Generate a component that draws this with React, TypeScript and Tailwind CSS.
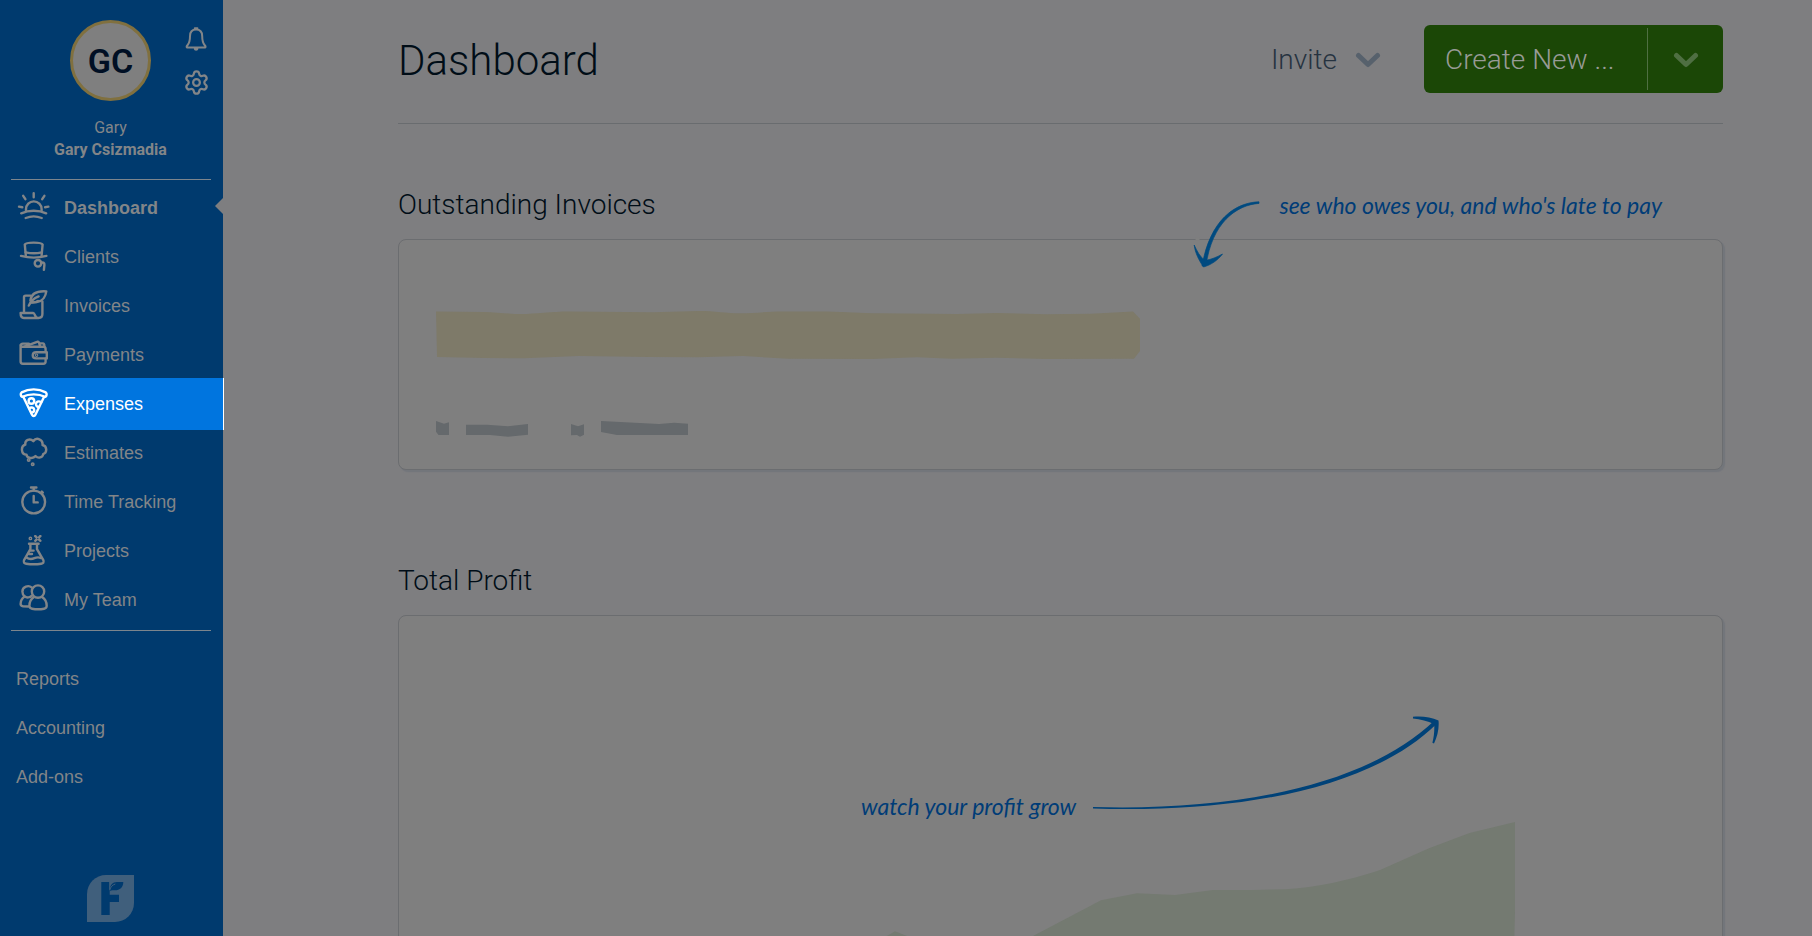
import React from 'react';
import { Settings } from 'lucide-react';
import clsx from 'clsx';

type NavItem = {
  label: string;
  icon: React.ReactNode;
};

const SunIcon = (
  <>
    <path d="M9 18.5v-1.3a7.8 7.8 0 0 1 15.6 0v1.3" />
    <path d="M4.2 21.3c7.5-3.4 17.5-3.4 25 0M8.7 26c5-2 11-2 16 0" />
    <path d="M16.7 1.2v4M6.2 3.8l2.2 3.4M27.4 3.8l-2.2 3.4M2 14.6l3.3.6M31.4 14.6l-3.3.6" />
  </>
);

const HatIcon = (
  <>
    <path d="M8.8 14.5 7.8 3.6C9 .9 24.400.9 25.6 3.6l-1 10.9" />
    <path d="M8.6 11.3c5 1.2 11.4 1.2 16.2 0" />
    <path d="M4 14.9c8 2.2 17.6 2.2 25.4 0" />
    <circle cx="21" cy="22.3" r="3.3" />
    <path d="M24.3 21.8c2-.8 3.3 0 3.1 2l-.5 5" />
  </>
);

const ScrollIcon = (
  <>
    <path d="M7 22V7.2c0-1 .6-1.6 1.6-1.6h4.8" />
    <path d="M25.4 11.5V24c0 2.6-1.4 4-4 4H7c-2.4 0-3.4-1.6-3.4-5h12.6c1.8 0 1.6 4.8 4.6 5" />
    <path d="M13.4 10.6C14.2 3.6 20 .8 29.3 1.4c-.6 4.6-3.4 9.6-8.8 10.4-2 .4-4 .2-5.6 1" />
    <path d="M11.8 15.6c1.8-4.4 5.4-7.4 9.8-9.2M16.4 12.4c1.6 0 3.2-.4 4.6-1.4" />
  </>
);

const WalletIcon = (
  <>
    <path d="M28.6 12.4V10c0-1.4-.7-2.2-2-2.2H5.4c-1.2 0-1.8-.8-1.8-1.8v16.6c0 1.4.8 2.2 2.2 2.2h20.6c1.4 0 2.2-.8 2.2-2.2v-2.8" />
    <path d="M4 6.4c0-1.2.6-1.8 1.8-1.8h6M7.4 7.6l13.4-5c1-.2 1.6 1.4 2.2 5M23.4 4.4h2.4c1 0 1.6.8 1.6 3" />
    <path d="M29.8 13.2H19.2c-4.6 0-4.6 6.2 0 6.2h10.6z" />
    <circle cx="19.6" cy="16.3" r=".5" />
  </>
);

const PizzaIcon = (
  <>
    <path d="M5.2 8.8C3.6 8.2 3.2 5.4 4.6 4.4c7.4-4 16.8-4 24.2 0 1.4 1 1 3.8-.6 4.4-6.8-3.2-16.2-3.2-23 0z" />
    <path d="m6.4 9 8.6 17.8c.8 1.6 2.6 1.6 3.4 0L27 9" />
    <circle cx="14.4" cy="13" r="2.8" />
    <path d="M24.2 14.2c-2.6-1.8-5.4-.4-5.2 2.2.2 1.6 1.4 2.6 3 2.6M12.2 20.2c2.4-1.6 5-.4 5 1.8 0 1.6-1.2 2.6-3 2.6" />
  </>
);

const ThoughtIcon = (
  <>
    <path d="M8.3 7.6c-.6-4.6 4.7-6.6 8-3.4 3-4.4 10-2 9.2 3.8 4.7 1 5 7.6.7 9.2-.4 3.4-5 4.6-7.7 1.8-2.5 3.2-8.7 2.2-9-1.4-5.7-.2-6-8.6-1.2-10z" />
    <circle cx="11.7" cy="22.9" r=".8" />
    <circle cx="15.7" cy="27.2" r=".8" />
  </>
);

const StopwatchIcon = (
  <>
    <circle cx="16.7" cy="16" r="11.4" />
    <path d="M14 1.5h5.4M16.7 1.5v3M24.8 5.6l1 1" />
    <path d="M16.7 10v6.4h4" />
  </>
);

const FlaskIcon = (
  <>
    <path d="M12 8.8h9.6M13.4 9v5.2L7.2 24.8c-1.2 2.6 0 3.6 2 3.9 5 .7 10 .7 15 0 2-.3 3.2-1.3 2-3.9L20 14.2V9" />
    <path d="M9.4 22.6c3.2 2.2 5.4 1.8 8 .6 2.2-1 4.4-1.2 6.4-.2M13.6 15.6h3M12 19h3" />
    <circle cx="13.4" cy="3.4" r=".7" />
    <path d="m18.200 1 1.4 1.300M23.400 1 22 2.300M18.200 5.800l1.400-1.300M23.400 5.800 22 4.500" />
  </>
);

const TeamIcon = (
  <>
    <circle cx="21" cy="7.6" r="6.2" />
    <path d="M14.6 3.4C11.6.9 5.4 2.4 5.4 7.6c0 4 3.4 6.2 6 5.800 1.500-.1 2.700-.9 3.600-2" />
    <path d="M7.6 12.6c-2.6 1.8-4 4.8-4 7.4 0 1.500.8 2 2.400 2.200l5.400.3" />
    <path d="M17 13c-2.8 1.8-4.600 5.400-4.600 8.800 0 1.800 1 2.600 2.700 2.900 4.200.8 7.800.8 12 0 1.700-.3 2.600-1.100 2.600-2.900 0-3.400-1.800-7-4.700-8.800" />
  </>
);

const navItems: NavItem[] = [
  { label: 'Dashboard', icon: SunIcon },
  { label: 'Clients', icon: HatIcon },
  { label: 'Invoices', icon: ScrollIcon },
  { label: 'Payments', icon: WalletIcon },
  { label: 'Expenses', icon: PizzaIcon },
  { label: 'Estimates', icon: ThoughtIcon },
  { label: 'Time Tracking', icon: StopwatchIcon },
  { label: 'Projects', icon: FlaskIcon },
  { label: 'My Team', icon: TeamIcon },
];

const moreItems = ['Reports', 'Accounting', 'Add-ons'];

const Chevron: React.FC<{ className?: string }> = ({ className }) => (
  <svg viewBox="0 0 26 16" className={clsx('h-4 w-[26px] fill-none stroke-current', className)} aria-hidden="true">
    <path d="M3.5 3.5 13 12.5 22.5 3.5" strokeWidth="5" strokeLinecap="round" strokeLinejoin="round" />
  </svg>
);

const Sidebar: React.FC = () => (
  <aside className='relative z-10 flex w-[223px] shrink-0 flex-col bg-[#003a6e] font-["Liberation_Sans",Arial,sans-serif] text-[#828588]'>
    <div className='relative flex flex-col items-center pt-5 pr-0.5 font-["Roboto",sans-serif]'>
      <div className="flex size-[81px] items-center justify-center rounded-full border-3 border-[#80703f] bg-[#7f7f7f] pt-0.5 text-[34px] font-semibold text-[#000f24]">
        GC
      </div>
      <div className="mt-4 text-center text-base leading-[22px]">
        <p>Gary</p>
        <p className="font-bold">Gary Csizmadia</p>
      </div>

      {/* Account shortcuts */}
      <div className="absolute top-[26px] right-[13px] flex flex-col gap-4">
        <button type="button" aria-label="Notifications" className="size-[27px]">
          <svg viewBox="0 0 27 27" className="size-full fill-none stroke-current" strokeWidth="2" strokeLinejoin="round" strokeLinecap="round">
            <path d="M11.8 3.8V2.3h2.6v1.5M13.1 3.6c-4.2 0-6.1 3-6.1 6.6 0 4.4-.6 6.6-2.4 8.8-1.2 1.4-1.5 2.6.2 2.6h16.6c1.7 0 1.4-1.2.2-2.6-1.8-2.2-2.4-4.4-2.4-8.8 0-3.6-1.9-6.6-6.1-6.6z" />
            <path d="M11.8 22.8c.2 1.3 2.4 1.3 2.6 0z" />
          </svg>
        </button>
        <button type="button" aria-label="Settings">
          <Settings className="size-[27px]" strokeWidth={2} />
        </button>
      </div>
    </div>

    <hr className="mt-[18px] mr-3 ml-[11px] border-[#7c858d]" />

    <nav className="mt-[3px] flex flex-col text-lg leading-6">
      {navItems.map(({ label, icon }) => (
        <a
          key={label}
          href="#"
          className={clsx(
            'relative flex items-center gap-3.5 pl-[17px]',
            label === 'Dashboard' && 'font-bold',
            label === 'Expenses'
              ? '-mt-px -mr-px -mb-0.5 h-[52px] border-r border-white bg-[#0075df] text-white'
              : 'h-[49px]',
          )}
        >
          <svg
            viewBox="0 0 33 32"
            className="h-8 w-[33px] fill-none stroke-current"
            strokeWidth="2.4"
            strokeLinecap="round"
            strokeLinejoin="round"
            aria-hidden="true"
          >
            {icon}
          </svg>
          {label}
          {label === 'Dashboard' && (
            <span className="absolute top-[15px] right-0 border-y-8 border-r-8 border-y-transparent border-r-[#7e7e80]" />
          )}
        </a>
      ))}
    </nav>

    <hr className="mt-1.5 mr-3 ml-[11px] border-[#7c858d]" />

    <nav className="mt-[23px] flex flex-col text-lg leading-6">
      {moreItems.map((label) => (
        <a key={label} href="#" className="flex h-[49px] items-center pl-4">
          {label}
        </a>
      ))}
    </nav>

    <div className="mt-auto flex justify-center pr-0.5 pb-3.5">
      <svg viewBox="0 0 47 47" className="size-[47px]" aria-hidden="true">
        <path d="M19 0h28v28a19 19 0 0 1-19 19H0V19A19 19 0 0 1 19 0z" fill="#405f7c" />
        <path d="M14.3 7h8.4v12.7H32V27h-9.3v13h-8.4z" fill="#003a6e" />
        <path d="M22.700 15.5C22.700 10 25.500 7 30 7h6.300c0 5.500-3.500 8.300-8.300 8.300-2 0-3.500-.5-5.300.7z" fill="#003a6e" />
        <path d="M22.700 15.200c.7-3.200 2.800-5.300 5.600-6.200M22.700 6.500v8" fill="none" stroke="#405f7c" />
      </svg>
    </div>
  </aside>
);

const Header: React.FC = () => (
  <header className="flex items-center border-b border-[#696c6f] pt-[25px] pb-[30px]">
    <h1 className="pt-[3px] text-[42px] leading-[65px] font-light">Dashboard</h1>
    <button type="button" className="ml-auto flex items-center gap-[18px] pt-0.5 text-[28px] font-light text-[#263340]">
      Invite
      <Chevron className="text-[#57616c]" />
    </button>
    <div className="ml-[43px] flex h-[68px] rounded-md bg-[#1b4706] py-[3px]">
      <button type="button" className="w-[224px] border-r border-[#4f6f42] pt-0.5 pl-[21px] text-left text-[28px] font-light text-[#989b96]">
        Create New ...
      </button>
      <button type="button" aria-label="More options" className="flex w-[75px] items-center justify-center pt-0.5 text-[#4f6f42]">
        <Chevron />
      </button>
    </div>
  </header>
);

const note = 'font-["Lato",cursive] text-[23px] leading-7 text-[#003c77] italic';
const card = 'rounded-lg border border-[#6b6d70] bg-[#7f7f7f] shadow-[2px_2px_1px_#73767b]';
const sectionTitle = 'text-[28px] leading-10 font-light';

const OutstandingInvoices: React.FC = () => (
  <section className="relative mt-[61px]">
    <div className="mb-3.5 flex items-center justify-between pr-[61px]">
      <h2 className={sectionTitle}>Outstanding Invoices</h2>
      <p className={note}>see who owes you, and who's late to pay</p>
    </div>
    <div className={clsx(card, 'pt-[71px] pb-8 pl-[37px]')}>
      <svg viewBox="0 0 704 48" className="h-12 w-[704px] fill-[#7e7a69]" aria-hidden="true">
        <path d="M0 .5 48 1C62 1.5 74 3 86 3s30-2.5 47-2.5L217 1.3 262 0c18 0 28 2.3 42 2.3S330 .5 347 .5h44c20 .5 33 1.5 53 1.8L521 3l40-1 49 1.3 45-.6L697 .5l7 7.2V40l-6 7.7-88 .3-49-1.3-45 1-35-1.4-45 1.7-84-.3-45-2.7-45 1.3-50-.3-69-1-55 2.3L48 47 1 46z" />
      </svg>
      <svg viewBox="0 0 252 16" className="mt-[62px] h-4 w-[252px] fill-[#65696c]" aria-hidden="true">
        <path d="m0 0 8 2.7 5-1.4V14H2.5L0 10.7z" />
        <path d="M30 3.7h21l21 1.6L92 3v10.7l-20 2L54 14H30z" />
        <path d="m135 3 7 2.3 6-2v10.4l-4 2-3-1.7-6 .3z" />
        <path d="m165 0 58 3 15-1.3 14 1V14h-71l-16-3z" />
      </svg>
    </div>

    <svg viewBox="0 0 67 68" className="absolute top-4 right-[463px] h-[68px] w-[67px]" aria-hidden="true">
      <path d="M2.5 38h4" stroke="#7f7f7f" strokeWidth="3" />
      <g fill="#004a80" stroke="#004a80" strokeWidth=".7">
        <path d="M66 .8C42 1.5 17 19 9 65l4-.5C19 22 43 4 66 2.4z" />
        <path d="M1.2 44c1 8 4.500 15 9.300 22C18 64 25 59 29.500 53c-5.500 3-11 5.500-17.500 6.500C7 56 4 50 1.200 44z" />
      </g>
    </svg>
  </section>
);

const TotalProfit: React.FC = () => (
  <section className="mt-[91px]">
    <h2 className={clsx(sectionTitle, 'mb-3.5')}>Total Profit</h2>
    <div className={clsx(card, 'pt-[100px]')}>
      <div className="flex items-end pl-[462px]">
        <p className={clsx(note, 'w-[232px]')}>watch your profit grow</p>
        <svg viewBox="0 0 346 93" className="mb-[11px] h-[93px] w-[346px] fill-[#004278]" aria-hidden="true">
          <path d="M0 91C140 95 271 71 341 5l2.500 3C275 75 140 97 0 92.600z" />
          <path d="M320 .8c9-1 18 .5 25.500 3.600.8 7.600-1 16-4.500 23l-1.600-.6c1.600-6.400 2.200-13 1.800-18.600-6.600-3-13.600-5-21.200-5.600z" />
        </svg>
      </div>
      <svg viewBox="0 0 629 130" className="mt-0.5 ml-[487px] h-[130px] w-[629px] fill-[#747a71]" aria-hidden="true">
        <path d="M0 114.5 9 109.300 21 114l30 16H0zM130 130l17-16 68-35.700 36-7 38 1.700 38-5h38l35-.7c16-1 30-3 45-6 18-4 33-8 49-13.300l49-21.700 40.500-15.300L629 0v90l-1 40z" />
      </svg>
    </div>
  </section>
);

export default function App() {
  return (
    <div className='flex h-screen overflow-hidden bg-[#7e7e80] font-["Roboto",sans-serif] text-[#000d17]'>
      <Sidebar />
      <main className="min-w-0 flex-1 pr-[89px] pl-[175px]">
        <Header />
        <OutstandingInvoices />
        <TotalProfit />
      </main>
    </div>
  );
}
